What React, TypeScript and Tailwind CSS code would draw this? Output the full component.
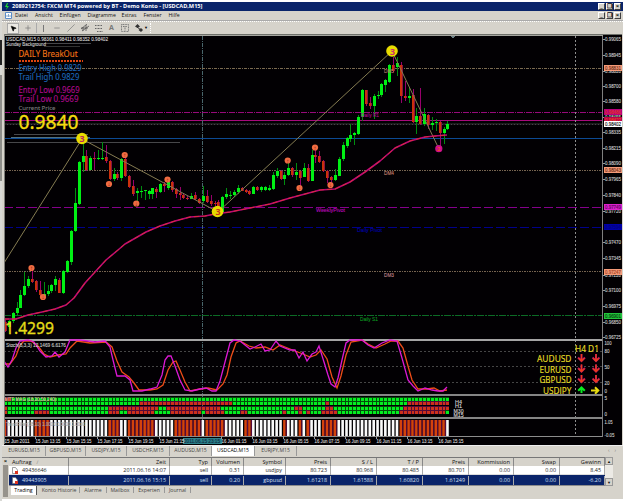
import { Minus, MousePointer2, Plus, Slash } from "lucide-react";

type Candle = [number, number, number, number, "g" | "r"];

// high, body top, body bottom, low, direction
const candles: Candle[] = [
  [320, 322, 331, 332, "r"], [320, 321, 327, 329, "g"], [312, 313, 321, 323, "g"], [302, 308, 313, 316, "g"],
  [290, 295, 308, 308, "g"], [272, 286, 295, 296, "g"], [276, 279, 286, 288, "g"], [271, 279, 282, 283, "r"],
  [280, 281, 290, 292, "r"], [281, 290, 295, 296, "r"], [282, 294, 296, 298, "g"], [285, 291, 294, 296, "g"],
  [284, 285, 291, 293, "g"], [276, 279, 285, 291, "g"], [278, 280, 293, 293, "r"], [270, 271, 293, 294, "g"],
  [260, 261, 272, 273, "g"], [230, 231, 262, 265, "g"], [188, 203, 231, 232, "g"], [161, 162, 204, 205, "g"],
  [138, 156, 162, 172, "g"], [150, 156, 170, 171, "r"], [156, 158, 170, 170, "g"], [152, 158, 159, 170, "r"],
  [150, 158, 159, 160, "g"], [142, 158, 159, 160, "g"], [145, 157, 161, 163, "r"], [160, 161, 179, 180, "r"],
  [168, 174, 179, 181, "g"], [172, 174, 178, 180, "r"], [158, 159, 178, 181, "g"], [157, 159, 176, 177, "r"],
  [175, 176, 187, 188, "r"], [180, 186, 194, 196, "r"], [188, 191, 193, 202, "g"], [186, 191, 192, 198, "g"],
  [190, 190, 191, 200, "g"], [190, 191, 194, 199, "g"], [188, 188, 194, 199, "g"], [187, 189, 192, 198, "r"],
  [183, 184, 192, 193, "g"], [182, 184, 186, 192, "r"], [180, 182, 188, 190, "g"], [181, 182, 190, 192, "r"],
  [188, 189, 194, 198, "r"], [187, 193, 195, 200, "r"], [194, 195, 198, 199, "r"], [196, 198, 199, 200, "r"],
  [193, 196, 199, 199, "g"], [192, 195, 199, 200, "r"], [198, 199, 203, 204, "r"], [186, 196, 201, 203, "g"],
  [190, 196, 202, 203, "r"], [195, 201, 204, 206, "r"], [201, 203, 204, 206, "r"], [200, 202, 212, 214, "r"],
  [196, 197, 212, 213, "g"], [188, 194, 197, 199, "g"], [191, 195, 196, 199, "g"], [190, 192, 195, 197, "g"],
  [185, 188, 192, 194, "g"], [187, 188, 191, 191, "r"], [189, 190, 192, 193, "r"], [190, 191, 194, 195, "r"],
  [186, 187, 194, 194, "g"], [186, 187, 190, 191, "r"], [186, 187, 190, 192, "g"], [186, 187, 190, 191, "g"],
  [185, 188, 190, 191, "g"], [172, 175, 189, 190, "g"], [168, 171, 176, 178, "g"], [170, 171, 179, 180, "r"],
  [172, 175, 179, 185, "g"], [163, 168, 175, 176, "g"], [167, 168, 175, 177, "r"], [163, 172, 175, 180, "g"],
  [171, 171, 178, 187, "r"], [163, 168, 177, 177, "g"], [164, 168, 181, 182, "r"], [150, 155, 181, 181, "g"],
  [148, 155, 157, 163, "r"], [151, 156, 162, 163, "r"], [160, 161, 171, 172, "r"], [170, 171, 178, 183, "r"],
  [176, 177, 180, 185, "r"], [169, 175, 180, 181, "g"], [157, 159, 176, 176, "g"], [142, 145, 159, 161, "g"],
  [137, 138, 146, 148, "g"], [124, 135, 139, 142, "g"], [132, 133, 135, 145, "g"], [115, 117, 134, 135, "g"],
  [89, 90, 117, 121, "g"], [90, 90, 104, 106, "r"], [97, 103, 106, 109, "r"], [94, 96, 106, 119, "g"],
  [91, 95, 96, 99, "g"], [83, 84, 95, 97, "g"], [79, 80, 85, 92, "g"], [64, 65, 82, 83, "g"],
  [57, 65, 71, 72, "r"], [57, 63, 67, 76, "g"], [62, 65, 96, 103, "r"], [81, 96, 98, 101, "r"],
  [87, 96, 98, 103, "g"], [89, 95, 122, 123, "r"], [108, 116, 122, 134, "g"], [88, 116, 124, 125, "r"],
  [108, 114, 124, 126, "g"], [114, 115, 125, 129, "r"], [117, 123, 125, 130, "g"], [119, 122, 123, 131, "g"],
  [121, 122, 133, 147, "r"], [127, 129, 133, 144, "g"], [121, 124, 129, 130, "g"],
];

const px = (i: number) => 4.9 + i * 3.882;
const inRanges = (i: number, ranges: number[][]) => ranges.some(([a, b]) => i >= a && i <= b);

const movingAverage =
  "4,319 16,319 28,315 42,312 55,309 66,305 74,298 85,283 95,272 106,260 118,250 125,244 146,232 160,226 175,221 190,217 205,216 215,214 230,212 250,208 270,204 290,198 305,194 320,190 335,189 350,182 365,172 380,161 395,148 410,141 425,137 435,136 447,135";

const stochMain =
  "4,361 8,367 12,360 16,348 20,341 28,340 34,342 40,351 46,357 52,356 55,352 59,357 65,352 70,340 80,340 95,342 105,341 110,347 113,360 117,376 125,376 130,380 133,391 142,391 150,389 157,387 162,375 165,360 168,356 171,356 175,366 180,380 185,390 192,391 200,389 206,388 212,391 216,391 220,381 225,362 230,343 234,340 240,341 245,345 250,349 255,347 261,344 265,351 270,350 276,341 280,346 290,350 295,350 299,358 303,352 307,361 312,354 316,352 319,346 324,362 328,375 331,384 335,387 338,378 342,360 346,343 350,340 362,340 368,345 374,348 382,343 390,340 397,341 402,358 408,380 413,386 418,391 425,388 432,390 438,391 443,391 447,387";

const stochSignal =
  "4,364 10,364 16,356 20,345 24,341 31,341 38,346 44,354 50,357 58,355 66,354 70,348 77,341 90,343 106,342 112,347 117,361 122,372 129,377 134,383 139,390 150,390 157,389 163,385 168,370 173,362 176,361 180,370 185,382 190,391 200,389 208,388 217,390 223,384 227,375 231,357 236,343 240,341 249,346 256,348 265,347 273,350 280,345 285,347 295,351 303,354 310,357 316,355 321,350 327,359 332,377 337,388 341,376 346,355 351,342 362,340 368,344 376,348 385,344 391,341 398,341 403,348 408,366 412,380 418,389 427,389 434,388 440,391 447,390";

const redDots = [
  [[0, 1]],
  [[35, 58], [83, 83], [104, 114]],
  [[0, 0], [27, 39], [42, 55], [75, 76], [83, 84], [103, 114]],
  [[0, 0], [8, 11], [27, 29], [32, 38], [43, 50], [52, 56], [61, 62], [72, 72], [76, 76], [78, 78], [82, 85], [102, 113]],
];
const orangeBars = [[0, 0], [8, 11], [27, 29], [32, 38], [44, 50], [52, 56], [62, 63], [72, 72], [76, 76], [78, 78], [82, 85], [102, 113]];

const priceScale: [string, number][] = [
  ["0.99065", 39], ["0.98945", 55], ["0.98820", 71], ["0.98700", 86], ["0.98580", 101], ["0.98455", 117],
  ["0.98335", 132], ["0.98215", 148], ["0.98090", 163], ["0.97965", 179], ["0.97840", 195], ["0.97720", 211],
  ["0.97470", 242], ["0.97345", 258], ["0.97220", 275], ["0.97100", 290],
  ["0.96975", 306], ["0.96850", 322], ["0.96725", 337],
];

const priceTags: [string, number, string, string][] = [
  ["0.98831", 68, "#f59a78", "#6b2c18"],
  ["0.98486", 112, "#b8007c", "#e03a20"],
  ["0.98427", 119.5, "#b8004c", "#e84a20"],
  ["0.98402", 124, "#ffffff", "#111111"],
  ["0.98043", 170, "#f59a78", "#6b2c18"],
  ["0.97749", 207, "#dd22cc", "#5a0060"],
  ["0.97594", 227, "#0000a8", "#000080"],
  ["0.97247", 271.5, "#f59a78", "#a04024"],
  ["0.96901", 315.5, "#22c43c", "#053c0a"],
];

const fractals: [number, number, string][] = [
  [31.5, 268, "↑"], [43, 297, "↓"], [109, 184, "↓"], [124.7, 155, "↑"], [136.3, 203.5, "↓"], [167.5, 179.5, "↑"],
  [287.7, 160.5, "↑"], [299.5, 188, "↓"], [315, 147.5, "↑"], [330.5, 185, "↓"],
];

const timeScale: [string, number][] = [
  ["15 Jun 2011", 4], ["15 Jun 13:15", 35], ["15 Jun 15:15", 66], ["15 Jun 17:15", 97], ["15 Jun 19:15", 128], ["15 Jun 21:15", 159],
  ["16 Jun 01:15", 221], ["16 Jun 03:15", 252], ["16 Jun 05:15", 283], ["16 Jun 07:15", 314], ["16 Jun 09:15", 345], ["16 Jun 11:15", 376],
  ["16 Jun 13:15", 407], ["16 Jun 15:15", 438],
];

function T({ x, y, s, w, c, children }: { x: number; y: number; s: number; w: number; c: string; children: string }) {
  return (
    <text
      x={x}
      y={y}
      fontSize={s}
      textLength={w}
      lengthAdjust="spacingAndGlyphs"
      fill={c}
      stroke={c}
      strokeWidth={s > 12 ? 0.35 : 0.12}
      className={s < 6 ? "font-['Liberation_Sans',sans-serif]" : ""}
    >
      {children}
    </text>
  );
}

function Level({ y, c, dash, w = 1 }: { y: number; c: string; dash?: string; w?: number }) {
  return <line x1="4" x2="602" y1={y} y2={y} stroke={c} strokeWidth={w} strokeDasharray={dash} />;
}

function Chart() {
  return (
    <svg
      className="block shrink-0 bg-[#020003] font-['Noto_Sans',sans-serif]"
      width="619"
      height="411"
      viewBox="4 34 619 411"
      shapeRendering="crispEdges"
    >
      <Level y={68.5} c="#7a6a50" dash="3 1 1 1" />
      <Level y={112.5} c="#960a7a" dash="6 1 1 1" />
      <Level y={120.5} c="#a80a7c" />
      <Level y={124} c="#1c1a1c" w={2} />
      <Level y={124.5} c="#47434a" dash="1 2" />
      <Level y={138.5} c="#0c4a94" />
      <Level y={170.5} c="#766450" dash="2 1 1 1" />
      <Level y={207.5} c="#84008a" dash="9 3" />
      <Level y={227.5} c="#00008a" dash="9 3" />
      <Level y={271.5} c="#766450" dash="2 1 1 1" />
      <Level y={315.5} c="#0c6c26" dash="7 1 2 1" />
      <g stroke="#47474a">
        <line x1="14" x2="88" y1="134.5" y2="134.5" />
        <line x1="11" x2="90" y1="137.5" y2="137.5" stroke="#54707c" />
        <line x1="7" x2="180" y1="142.5" y2="142.5" />
        <line x1="44" x2="91" y1="43.5" y2="43.5" />
        <line x1="44" x2="80" y1="46.5" y2="46.5" stroke="#333" />
      </g>
      <line x1="202.5" x2="202.5" y1="36" y2="436" stroke="#49656b" strokeDasharray="4 1 1 1" />
      <line x1="575.5" x2="575.5" y1="36" y2="436" stroke="#8e8e8e" strokeDasharray="2 2" />

      {candles.map(([hi, top, bottom, lo, dir], i) => {
        const x = Math.round(px(i));
        return (
          <g key={i}>
            <rect x={x} y={hi} width="1" height={lo - hi} fill={dir === "g" ? "#008c10" : "#98006c"} />
            <rect x={x - 1} y={top} width="3" height={bottom - top} fill={dir === "g" ? "#00f014" : "#cc300c"} />
            {dir === "r" && <rect x={x + 1} y={top} width="1" height={bottom - top} fill="#8c1440" />}
          </g>
        );
      })}
      <polyline points="4,263 82,139 218,212 392,51 439,149" fill="none" stroke="#857b52" shapeRendering="auto" />
      <g fill="none" strokeLinejoin="round" shapeRendering="auto">
        <polyline points={movingAverage} stroke="#bb0878" strokeWidth="1.6" />
        <polyline points={movingAverage} stroke="#e43430" strokeWidth="0.8" strokeDasharray="5 3" />
      </g>

      <g shapeRendering="auto" textAnchor="middle" fontWeight="bold">
        {fractals.map(([x, y, arrow]) => (
          <g key={x}>
            <circle cx={x} cy={y} r="3.1" fill="#f06c42" />
            <text x={x} y={y + 2} fontSize="6" fill="#80180c">{arrow}</text>
          </g>
        ))}
        {[[82, 138.5], [392, 51], [217.5, 211.5]].map(([x, y]) => (
          <circle key={x} cx={x} cy={y} r="5.8" fill="#e8dc00" />
        ))}
        <text x="82" y="142" fontSize="9" fill="#b8285c">3</text>
        <text x="392.5" y="54.5" fontSize="9" fill="#d02c70">3</text>
        <text x="218" y="215" fontSize="9" fill="#c83818">3</text>
        <circle cx="438.8" cy="148.7" r="3.6" fill="#cc0d8c" />
        <text x="438.8" y="151" fontSize="6" fill="#f04828">2</text>
      </g>

      <T x={6} y={41.3} s={5} w={102} c="#d2d2d2">USDCAD,M15  0.98361 0.98411 0.98352 0.98402</T>
      <T x={6} y={46.3} s={5} w={40} c="#c4c4c4">Sunday Background</T>
      <T x={18.5} y={57.2} s={8.8} w={59} c="#f47516">DAILY BreakOut</T>
      <line x1="19" x2="83" y1="60.5" y2="60.5" stroke="#e0440e" strokeWidth="2" strokeDasharray="2 1" />
      <T x={18.5} y={70.8} s={8.3} w={63} c="#1c66b8">Entry High 0.9829</T>
      <T x={18.5} y={80.2} s={8.3} w={61} c="#1c66b8">Trail High 0.9829</T>
      <T x={18.5} y={92.5} s={8.3} w={61} c="#b00a8c">Entry Low 0.9669</T>
      <T x={18.5} y={102.2} s={8.3} w={60} c="#b00a8c">Trail Low 0.9669</T>
      <T x={18.5} y={110} s={6} w={37} c="#7c7c7c">Current Price</T>
      <T x={18.5} y={129} s={20} w={60} c="#f4dc10">0.9840</T>
      <T x={5} y={333.5} s={16} w={49} c="#e4dc18">1.4299</T>
      <T x={384} y={73} s={5.5} w={10} c="#b47c68">DM5</T>
      <T x={361} y={117} s={5.5} w={18} c="#a8088c">Daily R1</T>
      <T x={384} y={175} s={5.5} w={10} c="#c88470">DM4</T>
      <T x={316} y={212.3} s={5.5} w={29} c="#b808b8">WeeklyPivot</T>
      <T x={357} y={232} s={5.5} w={25} c="#0000a4">Daily Pivot</T>
      <T x={384} y={276.5} s={5.5} w={10} c="#c0888c">DM3</T>
      <T x={360} y={321} s={5.5} w={18} c="#0c9420">Daily S1</T>

      {/* stochastic */}
      {[351.5, 366.5, 382.5].map((y) => (
        <Level key={y} y={y} c="#454545" dash="2 2" />
      ))}
      <rect x="4" y="339" width="598" height="2" fill="#a4a4a4" />
      <g fill="none" strokeWidth="1.3" shapeRendering="auto">
        <polyline points={stochSignal} stroke="#ee4c18" />
        <polyline points={stochMain} stroke="#dc18d4" />
      </g>
      <T x={6} y={347} s={5.5} w={60} c="#c8c8c8">Stoch(8,3,3) 12.1469 6.6176</T>
      <T x={575} y={351.5} s={8.6} w={24} c="#e6dc24">H4 D1</T>
      {([["AUDUSD", 537, 362], ["EURUSD", 539.5, 372.7], ["GBPUSD", 539.5, 383.3], ["USDJPY", 543, 393.5]] as [string, number, number][]).map(([name, x, y]) => (
        <T key={name} x={x} y={y} s={8.5} w={571.5 - x} c="#e6dc24">{name}</T>
      ))}
      <g fill="none" strokeWidth="2" shapeRendering="auto">
        {[357.5, 368, 378.5].map((y) =>
          [581.5, 596].map((x) => (
            <g key={x}>
              <path d={`M${x} ${y - 3.5}v7m-3.5-3.5 3.5 3.5 3.5-3.5`} stroke="#a80c6c" />
              <path d={`M${x} ${y - 3.5}v7m-3-3 3 3 3-3`} stroke="#ec3c1c" strokeWidth="1.3" />
            </g>
          )),
        )}
        <path d="M581.5 393v-5m-3.3 2.8 3.3-3.3 3.3 3.3" stroke="#08ec20" />
        <path d="M591 390.5h7m-3-3.3 3.3 3.3-3.3 3.3" stroke="#e8dc10" />
      </g>

      {/* multi timeframe dots */}
      <rect x="4" y="394" width="598" height="2" fill="#858585" />
      {[399, 403, 408, 412].map((y, row) =>
        candles.map((_, i) => {
          const red = inRanges(i, redDots[row]);
          return (
            <g key={`${row}-${i}`}>
              <rect x={px(i) - 2} y={y - 2} width="4" height="4" fill={red ? "#540a38" : "#044c0c"} />
              <rect x={Math.round(px(i)) - 1} y={y - 1} width="3" height="3" fill={red ? "#cc301c" : "#04ec20"} />
            </g>
          );
        }),
      )}
      <T x={5} y={401} s={5.5} w={51} c="#ddb0a0">MTF MAG (18,20,50,240)</T>
      {([["H4", 403.5], ["H1", 408], ["M30", 412.5], ["M15", 417]] as [string, number][]).map(([name, y]) => (
        <T key={name} x={name.length > 2 ? 453.5 : 455} y={y} s={5} w={name.length > 2 ? 10 : 7} c="#d4d4d4">{name}</T>
      ))}

      {/* trend histogram */}
      <rect x="4" y="417" width="598" height="2" fill="#858585" />
      {candles.map((_, i) => {
        const orange = inRanges(i, orangeBars);
        const x = px(i) - 1.3;
        return (
          <g key={i} shapeRendering="auto">
            <rect x={x} y="420" width="2.6" height="16" fill={orange ? "#d4420c" : "#fafafa"} />
            {orange && <rect x={x + 2.6} y="420" width="1.2" height="16" fill="#580a3c" />}
          </g>
        );
      })}
      <T x={6} y={425.5} s={5.5} w={79} c="#a4a4a4">TrendFilter(38,10) 1.0000 0.0000 1.0000</T>
      <rect x="4" y="436" width="598" height="1" fill="#8c8c8c" />
      <rect x="183" y="438" width="39" height="6" fill="#2c8088" />
      {timeScale.map(([label, x]) => (
        <g key={label}>
          <rect x={x} y="436" width="1" height="3" fill="#999" />
          <T x={x + 0.5} y={443} s={4.9} w={25} c="#d4d4d4">{label}</T>
        </g>
      ))}
      <T x={184} y={443} s={4.9} w={36} c="#102c44">2011.06.15 23:15</T>

      {/* price axis */}
      <line x1="602.5" x2="602.5" y1="35" y2="437" stroke="#7f7f7f" />
      {priceScale.map(([label, y]) => (
        <g key={label}>
          <rect x="603" y={y} width="2" height="1" fill="#999" />
          <T x={605} y={y + 2} s={4.7} w={16} c="#c6c6c6">{label}</T>
        </g>
      ))}
      {priceTags.map(([label, y, bg, fg]) => (
        <g key={label}>
          <rect x="604" y={y - 2.7} width="18" height="5.7" fill={bg} />
          <T x={605} y={y + 2} s={4.7} w={16} c={fg}>{label}</T>
        </g>
      ))}
      {([["100", 345, 7], ["80", 353, 5], ["50", 368.5, 5], ["20", 384.5, 5], ["0", 392.5, 2.5], ["5", 400, 2.5], ["0", 416, 2.5], ["1.05", 424, 8], ["-0.05", 436.5, 10]] as [string, number, number][]).map(([label, y, w]) => (
        <T key={`${label}${y}`} x={604.5} y={y} s={5} w={w} c="#c6c6c6">{label}</T>
      ))}
      <path d="M450 36h5l-2.5 2.5z" fill="#6c8084" />
      <rect x="4" y="34" width="619" height="1" fill="#6e706a" />
      <rect x="4" y="35" width="599" height="1" fill="#a6a6a0" />
      <rect x="4" y="34" width="1" height="410" fill="#7c7c78" />
      <rect x="622" y="34" width="1" height="411" fill="#d6d3cb" />
    </svg>
  );
}

function WindowButtons() {
  return (
    <div className="flex gap-px">
      {["_", "❐", "×"].map((sign) => (
        <span key={sign} className="h-[7px] w-[7px] border border-t-white border-l-white border-r-[#404040] border-b-[#404040] bg-[#d6d3cb] text-center text-[6px] leading-[5px] font-bold text-black">
          {sign}
        </span>
      ))}
    </div>
  );
}

function Toolbar() {
  const icon = "h-[8px] w-[8px] shrink-0";
  return (
    <div className="flex h-[13px] items-center border-t border-dotted border-white pl-[5px] text-[#777]">
      <div className="flex h-[11px] w-[12px] items-center justify-center border border-[#aaa] bg-[#ebe9e3]">
        <MousePointer2 className="h-[7px] w-[7px] fill-black text-black" />
      </div>
      <Plus className={`${icon} ml-[5px]`} />
      <span className="ml-[4px] h-[10px] w-px bg-[#aaa]" />
      <span className="ml-[6px] h-[7px] w-px bg-[#777]" />
      <Minus className={`${icon} ml-[9px]`} />
      <Slash className={`${icon} ml-[6px]`} />
      <svg className="ml-[6px] h-[8px] w-[8px]" viewBox="0 0 8 8" stroke="#555" fill="none">
        <path d="M0 5 6 0M1 7 8 2M2 3v4M5 1v6M0 4h7" strokeWidth=".8" />
      </svg>
      <svg className="ml-[6px] h-[8px] w-[8px]" viewBox="0 0 8 8" stroke="#666" fill="none">
        <path d="M0 1.5h7M0 4.5h7M2 7.5h6" strokeDasharray="1 .5" />
      </svg>
      <span className="ml-[6px] w-[6px] text-[7px] font-bold">A</span>
      <svg className="ml-[6px] h-[8px] w-[8px]" viewBox="0 0 8 8" stroke="#777" fill="none">
        <path d="M.5.5h7v7h-7zM2 2.5h4M4 2.5v4" strokeDasharray="1 .6" />
      </svg>
      <svg className="ml-[6px] h-[8px] w-[8px]" viewBox="0 0 8 8" fill="#333">
        <path d="M0 2.5 2.5 0 5 2.5 2.5 4zM3.5 6 6 4l2 2-2 2z" />
        <path d="m2 3 4 3" stroke="#333" />
      </svg>
      <span className="ml-px text-[4px] text-black">▼</span>
      <span className="ml-[2px] h-[10px] border-l border-dotted border-white" />
    </div>
  );
}

const menu: [string, string][] = [
  ["Datei", "w-[20px]"], ["Ansicht", "w-[24.5px]"], ["Einfügen", "w-[28px]"], ["Diagramme", "w-[34px]"], ["Extras", "w-[22px]"], ["Fenster", "w-[25px]"], ["Hilfe", "w-[20px]"],
];

const chartTabs: [string, string][] = [
  ["EURUSD,M15", "w-[43px]"], ["GBPUSD,M15", "w-[40px]"], ["USDJPY,M15", "w-[41px]"], ["USDCHF,M15", "w-[43px]"], ["AUDUSD,M15", "w-[42px]"], ["USDCAD,M15", "w-[43px]"], ["EURJPY,M15", "w-[42px]"],
];

const grid = "grid grid-cols-[60px_101px_42px_32px_42px_45px_46px_46px_46px_45px_46px_45px]";
const head = ["Auftrag", "Zeit", "Typ", "Volumen", "Symbol", "Preis", "S / L", "T / P", "Preis", "Kommission", "Swap", "Gewinn"];
const orders = [
  ["49436646", "2011.06.16 14:07", "sell", "0.31", "usdjpy", "80.723", "80.968", "80.485", "80.701", "0.00", "0.00", "8.45"],
  ["49443905", "2011.06.16 15:15", "sell", "0.20", "gbpusd", "1.61218", "1.61588", "1.60820", "1.61249", "0.00", "0.00", "-6.20"],
];

function Terminal() {
  return (
    <div className="flex h-[40px]">
      <div className="flex w-[7px] shrink-0 flex-col items-center border-t border-[#888]">
        <span className="text-[6px] leading-[7px] font-bold">×</span>
        <div className="w-[5px] flex-1 bg-[#96938c]" />
      </div>
      <div className="flex min-w-0 flex-1 flex-col">
        <div className="flex">
          <div className="w-[596px] shrink-0">
            <div className={`${grid} h-[9px] border-t border-[#777] text-[5.7px] leading-[8px]`}>
              {head.map((label, i) => (
                <span key={i} className={`border-r border-[#888] pr-[3px] ${i ? "text-right" : "pl-[3px]"}`}>
                  {label}
                  {i === 0 && <span className="ml-[5px] text-[5px] text-[#888]">∕</span>}
                </span>
              ))}
            </div>
            {orders.map((row, r) => (
              <div key={row[0]} className={`${grid} border-b text-[5.4px] leading-[9px] ${r ? "h-[11px] border-[#8c8c8c] bg-[#0a246a] pt-px text-[#d6e0f4]" : "h-[9px] border-[#ddd] bg-white text-[#222]"}`}>
                {row.map((cell, i) => (
                  <span key={i} className={`border-r border-[#aaa] pr-[3px] ${i ? "text-right" : "flex items-center gap-[4px] pl-[3px]"}`}>
                    {i === 0 && (
                      <svg className="h-[7px] w-[6px]" viewBox="0 0 6 7">
                        <path d="M.5.5h3L5.5 3v3.5h-5z" fill="#fff" stroke="#777" strokeWidth=".7" />
                        <path d="M3 4h3v3H3z" fill="#dc3420" />
                      </svg>
                    )}
                    {cell}
                  </span>
                ))}
              </div>
            ))}
          </div>
          <div className="flex w-[8px] flex-col justify-between bg-[#eceae5] text-center text-[4px] leading-[7px]">
            <span className="h-[8px] border border-[#999] bg-[#d6d3cb]">▲</span>
            <span className="h-[8px] border border-[#999] bg-[#d6d3cb]">▼</span>
          </div>
        </div>
        <div className="flex h-[11px] text-[5.2px] leading-[9px] text-[#444]">
          <span className="mr-[2px] ml-[2px] h-[9px] w-[26px] border-r border-[#555] bg-white text-center text-black">Trading</span>
          {[["Konto Historie", "w-[41px]"], ["Alarme", "w-[27px]"], ["Mailbox", "w-[27px]"], ["Experten", "w-[31px]"], ["Journal", "w-[26px]"]].map(([label, width]) => (
            <span key={label} className={`${width} text-center`}>
              <span className="inline-block w-full border-r border-[#999] leading-[6px]">{label}</span>
            </span>
          ))}
        </div>
      </div>
    </div>
  );
}

export default function App() {
  return (
    <div className="flex h-[501px] w-[625px] overflow-hidden bg-white font-['Open_Sans',sans-serif] whitespace-nowrap text-[#111]">
      <div className="flex w-[2px] shrink-0 flex-col bg-[#d9d9d5]">
        <div className="mt-[40px] h-[25px] bg-[#222]" />
        <div className="mt-[10px] h-[106px] bg-[#8e8e8a]" />
      </div>
      <div className="mt-[2px] flex h-[497px] w-[621px] flex-col bg-[#d6d3cb]">
        <div className="flex h-[9px] shrink-0 items-center bg-[#0a246a] pr-[2px] pl-[2px]">
          <svg className="h-[7px] w-[6px]" viewBox="0 0 6 7">
            <path d="M3 0 1 4h2L2 7l3-4H3l1-3z" fill="#20d830" />
          </svg>
          <span className="mr-auto ml-[2px] text-[5.6px] leading-[9px] font-bold text-white">
            2089212754: FXCM MT4 powered by BT - Demo Konto - [USDCAD,M15]
          </span>
          <WindowButtons />
        </div>
        <div className="flex h-[10px] shrink-0 items-center border-b border-[#aaa] pr-[2px] pl-[3px] text-[5.2px] leading-[9px]">
          <svg className="mr-[3px] h-[7px] w-[7px]" viewBox="0 0 7 7">
            <path d="M.5.5h6v6h-6z" fill="#fff" stroke="#5a8cc8" />
            <path d="M2 5V3m1.5 2V2M5 5V3" stroke="#4a80b8" strokeWidth=".7" />
          </svg>
          {menu.map(([label, width]) => (
            <span key={label} className={width}>{label}</span>
          ))}
          <div className="ml-auto">
            <WindowButtons />
          </div>
        </div>
        <Toolbar />
        <div className="flex shrink-0 pl-[2px]">
          <Chart />
        </div>
        <div className="flex h-[12px] shrink-0 border-t border-[#eee] pl-[1px] text-[5.1px] leading-[9px] text-[#444]">
          {chartTabs.map(([label, width]) => (
            <span key={label} className={`${width} h-[10px] border-r border-[#999] text-center ${label === "USDCAD,M15" ? "bg-white text-black" : ""}`}>
              {label}
            </span>
          ))}
          <span className="ml-auto pr-[2px] tracking-[5px] text-[#777]">‹›</span>
        </div>
        <Terminal />
      </div>
    </div>
  );
}
